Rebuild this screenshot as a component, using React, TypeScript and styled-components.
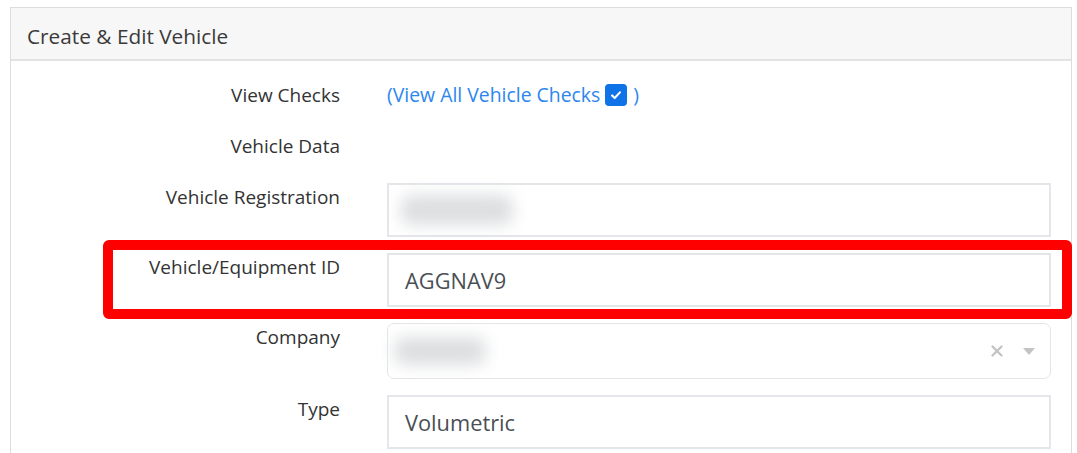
import React from "react"
import styled, { createGlobalStyle } from "styled-components"

const GlobalStyle = createGlobalStyle`
  body {
    margin: 0;
    background: #ffffff;
    font-family: "Open Sans", "Noto Sans", sans-serif;
  }
`

const App: React.FC = () => {
  return (
    <>
      <GlobalStyle />
      <Page>
        <Card>
          <CardHeader>Create &amp; Edit Vehicle</CardHeader>
          <CardBody>
            <Row>
              <Label>View Checks</Label>
              <LinkText href="#">
                (View All Vehicle Checks
                <Check>
                  <svg width="14" height="14" viewBox="0 0 16 16">
                    <path d="M3.5 8.5l3 3 6-6.5" fill="none" stroke="#fff" strokeWidth="2.4" strokeLinecap="round" strokeLinejoin="round" />
                  </svg>
                </Check>
                )
              </LinkText>
            </Row>
            <Row>
              <Label>Vehicle Data</Label>
              <div />
            </Row>
            <Row>
              <Label>Vehicle Registration</Label>
              <Field>
                <Blur $width={112} $height={30} />
              </Field>
            </Row>
            <Row>
              <Label>Vehicle/Equipment ID</Label>
              <Field>AGGNAV9</Field>
              <Highlight />
            </Row>
            <Row>
              <Label>Company</Label>
              <Select>
                <Blur $width={92} $height={28} />
                <SelectIcons>
                  <svg width="14" height="14" viewBox="0 0 14 14">
                    <path d="M2.5 2.5l9 9M11.5 2.5l-9 9" stroke="#c4c4c4" strokeWidth="2.4" strokeLinecap="round" />
                  </svg>
                  <svg width="14" height="10" viewBox="0 0 14 10">
                    <path d="M1 2h12L7 9z" fill="#c4c4c4" />
                  </svg>
                </SelectIcons>
              </Select>
            </Row>
            <Row>
              <Label>Type</Label>
              <Field>Volumetric</Field>
            </Row>
          </CardBody>
        </Card>
      </Page>
    </>
  )
}

const Page = styled.div`
  padding: 7px 5px 0 10px;
  height: 446px;
  overflow: hidden;
`

const Card = styled.div`
  border: 1px solid #dcdcdc;
  border-bottom: none;
  width: 1060px;
  min-height: 460px;
  background: #ffffff;
`

const CardHeader = styled.div`
  height: 53px;
  box-sizing: border-box;
  padding: 4px 0 0 16px;
  display: flex;
  align-items: center;
  background: #f7f7f7;
  border-bottom: 2px solid #e2e2e2;
  color: #3a3a3a;
  font-size: 20.8px;
`

const CardBody = styled.div`
  padding-top: 20px;
  display: flex;
  flex-direction: column;
  gap: 16px;
`

const Row = styled.div`
  position: relative;
  display: grid;
  grid-template-columns: 329px 664px;
  column-gap: 47px;
  padding-right: 20px;
  min-height: 35px;
  align-items: start;
`

const Label = styled.div`
  text-align: right;
  font-size: 19px;
  line-height: 28px;
  color: #333333;
`

const LinkText = styled.a`
  display: inline-flex;
  align-items: center;
  font-size: 19.4px;
  line-height: 28px;
  color: #2d86ee;
  text-decoration: none;
`

const Check = styled.span`
  display: inline-flex;
  align-items: center;
  justify-content: center;
  width: 22px;
  height: 22px;
  margin: 0 6px 0 5px;
  border-radius: 4px;
  background: #0f72e6;
`

const Field = styled.div`
  height: 54px;
  box-sizing: border-box;
  border: 2px solid #e4e6ea;
  padding: 0 16px;
  display: flex;
  align-items: center;
  font-size: 21.8px;
  color: #4a4f55;
`

const Select = styled.div`
  height: 56px;
  box-sizing: border-box;
  border: 1.5px solid #e6e6e6;
  border-radius: 7px;
  padding: 0 14px 0 10px;
  display: flex;
  align-items: center;
  justify-content: space-between;
`

const SelectIcons = styled.div`
  display: flex;
  align-items: center;
  gap: 18px;
`

const Blur = styled.span<{ $width: number; $height: number }>`
  display: block;
  width: ${(p) => p.$width}px;
  height: ${(p) => p.$height}px;
  margin-left: -4px;
  border-radius: 10px;
  background: #dcdee0;
  filter: blur(8px);
`

const Highlight = styled.div`
  position: absolute;
  left: 92px;
  right: -1px;
  top: -13px;
  bottom: -12px;
  border: 10px solid #ff0000;
  border-radius: 6px;
  pointer-events: none;
`

export default App
